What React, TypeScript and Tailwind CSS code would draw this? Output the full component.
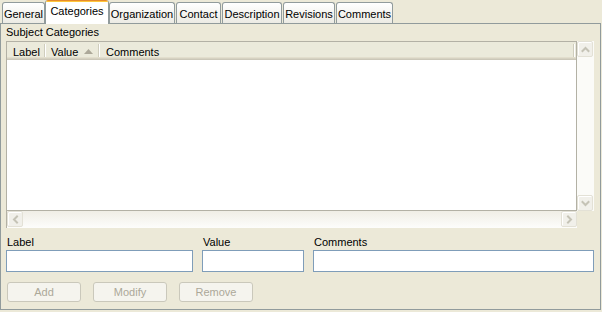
import React from "react";

function Chevron({ dir }: { dir: "up" | "down" | "left" | "right" }) {
  const pts: Record<string, string> = {
    up: "1.5,6 4.5,3 7.5,6",
    down: "1.5,3 4.5,6 7.5,3",
    left: "6,1.5 3,4.5 6,7.5",
    right: "3,1.5 6,4.5 3,7.5",
  };
  return (
    <svg width="9" height="9" viewBox="0 0 9 9">
      <polyline points={pts[dir]} fill="none" stroke="#c5c3b6" strokeWidth="2" strokeLinecap="square" />
    </svg>
  );
}

function SbBtn({ dir }: { dir: "up" | "down" | "left" | "right" }) {
  return (
    <div className="w-[16px] h-[16px] rounded-[2px] border border-[#e3e1d6] bg-[#f1f0ea] shadow-[inset_1px_1px_0_#ffffff] flex items-center justify-center">
      <Chevron dir={dir} />
    </div>
  );
}

function Tab({ label, cls }: { label: string; cls: string }) {
  return (
    <div
      className={
        "h-[21px] border border-b-0 border-[#919b9c] rounded-t-[3px] bg-gradient-to-b from-white to-[#ecebe4] text-center leading-[22px] overflow-hidden " +
        cls
      }
    >
      {label}
    </div>
  );
}

export default function App() {
  return (
    <div className="w-[602px] h-[312px] bg-[#ece9d8] font-['Liberation_Sans',Arial,sans-serif] text-[11px] text-black overflow-hidden">
      {/* tabs */}
      <div className="flex items-end h-[23px]">
        <Tab label="General" cls="ml-[2px] w-[43px]" />
        <div className="relative z-10 w-[64px] h-[24px] -mb-px rounded-t-[3px] bg-white border-x border-[#919b9c] overflow-hidden">
          <div className="h-px bg-[#e68b2c]" />
          <div className="h-px bg-[#ffc73c]" />
          <div className="text-center leading-[18px]">Categories</div>
        </div>
        <Tab label="Organization" cls="w-[66px]" />
        <Tab label="Contact" cls="ml-px w-[45px]" />
        <Tab label="Description" cls="ml-px w-[60px]" />
        <Tab label="Revisions" cls="ml-px w-[52px]" />
        <Tab label="Comments" cls="ml-px w-[57px]" />
      </div>

      {/* panel */}
      <div className="w-[601px] h-[287px] border border-[#919b9c] pl-[5px] flex flex-col">
        <div className="h-[17px] leading-[17px]">Subject Categories</div>

        {/* table scroll pane */}
        <div className="w-[588px] h-[187px] flex flex-col">
          <div className="flex h-[170px]">
            <div className="w-[571px] h-[170px] border border-[#b3b1a5] bg-white flex flex-col">
              <div className="h-[18px] bg-[#ebeadb] shadow-[inset_0_-1px_#cbc7b8,inset_0_-2px_#d6d2c2,inset_0_-3px_#e2decd] flex">
                <div className="w-[38px] flex">
                  <div className="flex-1 pl-[6px] leading-[20px]">Label</div>
                  <div className="w-px h-[13px] mt-[2px] bg-[#cfcdbd]" />
                </div>
                <div className="w-px h-[13px] mt-[2px] bg-white" />
                <div className="w-[53px] flex">
                  <div className="pl-[5px] leading-[20px]">Value</div>
                  <div className="ml-[6px] mt-[7px]">
                    <svg width="9" height="5" viewBox="0 0 9 5">
                      <polygon points="4.5,0 9,5 0,5" fill="#aca899" />
                    </svg>
                  </div>
                  <div className="flex-1" />
                  <div className="w-px h-[13px] mt-[2px] bg-[#cfcdbd]" />
                </div>
                <div className="w-px h-[13px] mt-[2px] bg-white" />
                <div className="flex-1 flex">
                  <div className="flex-1 pl-[6px] leading-[20px]">Comments</div>
                  <div className="w-px h-[13px] mt-[2px] bg-[#cfcdbd]" />
                  <div className="w-px h-[13px] mt-[2px] bg-white" />
                  <div className="w-px" />
                </div>
              </div>
              <div className="flex-1 bg-white" />
            </div>
            <div className="w-[17px] h-[170px] bg-[#fbfbf8] flex flex-col justify-between">
              <SbBtn dir="up" />
              <SbBtn dir="down" />
            </div>
          </div>
          <div className="flex h-[17px]">
            <div className="w-[571px] h-[17px] border-l border-[#b3b1a5] bg-gradient-to-b from-[#f0eee6] to-[#fdfdfb] flex justify-between">
              <SbBtn dir="left" />
              <SbBtn dir="right" />
            </div>
            <div className="w-[17px]" />
          </div>
        </div>

        {/* fields */}
        <div className="flex gap-[9px] w-[589px]">
          <div className="w-[187px] flex flex-col">
            <div className="h-[22px] pt-[6px] leading-[16px] pl-px">Label</div>
            <div className="h-[22px] border border-[#7f9db9] bg-white" />
          </div>
          <div className="w-[102px] flex flex-col">
            <div className="h-[22px] pt-[6px] leading-[16px] pl-px">Value</div>
            <div className="h-[22px] border border-[#7f9db9] bg-white" />
          </div>
          <div className="w-[281px] flex flex-col">
            <div className="h-[22px] pt-[6px] leading-[16px] pl-px">Comments</div>
            <div className="h-[22px] border border-[#7f9db9] bg-white" />
          </div>
        </div>

        {/* buttons */}
        <div className="flex gap-[12px] mt-[10px] ml-px">
          {["Add", "Modify", "Remove"].map((b) => (
            <div
              key={b}
              className="w-[74px] h-[20px] rounded-[3px] border border-[#cac8bb] bg-[#f5f4ee] text-[#aca899] text-center leading-[19px]"
            >
              {b}
            </div>
          ))}
        </div>
      </div>
    </div>
  );
}
